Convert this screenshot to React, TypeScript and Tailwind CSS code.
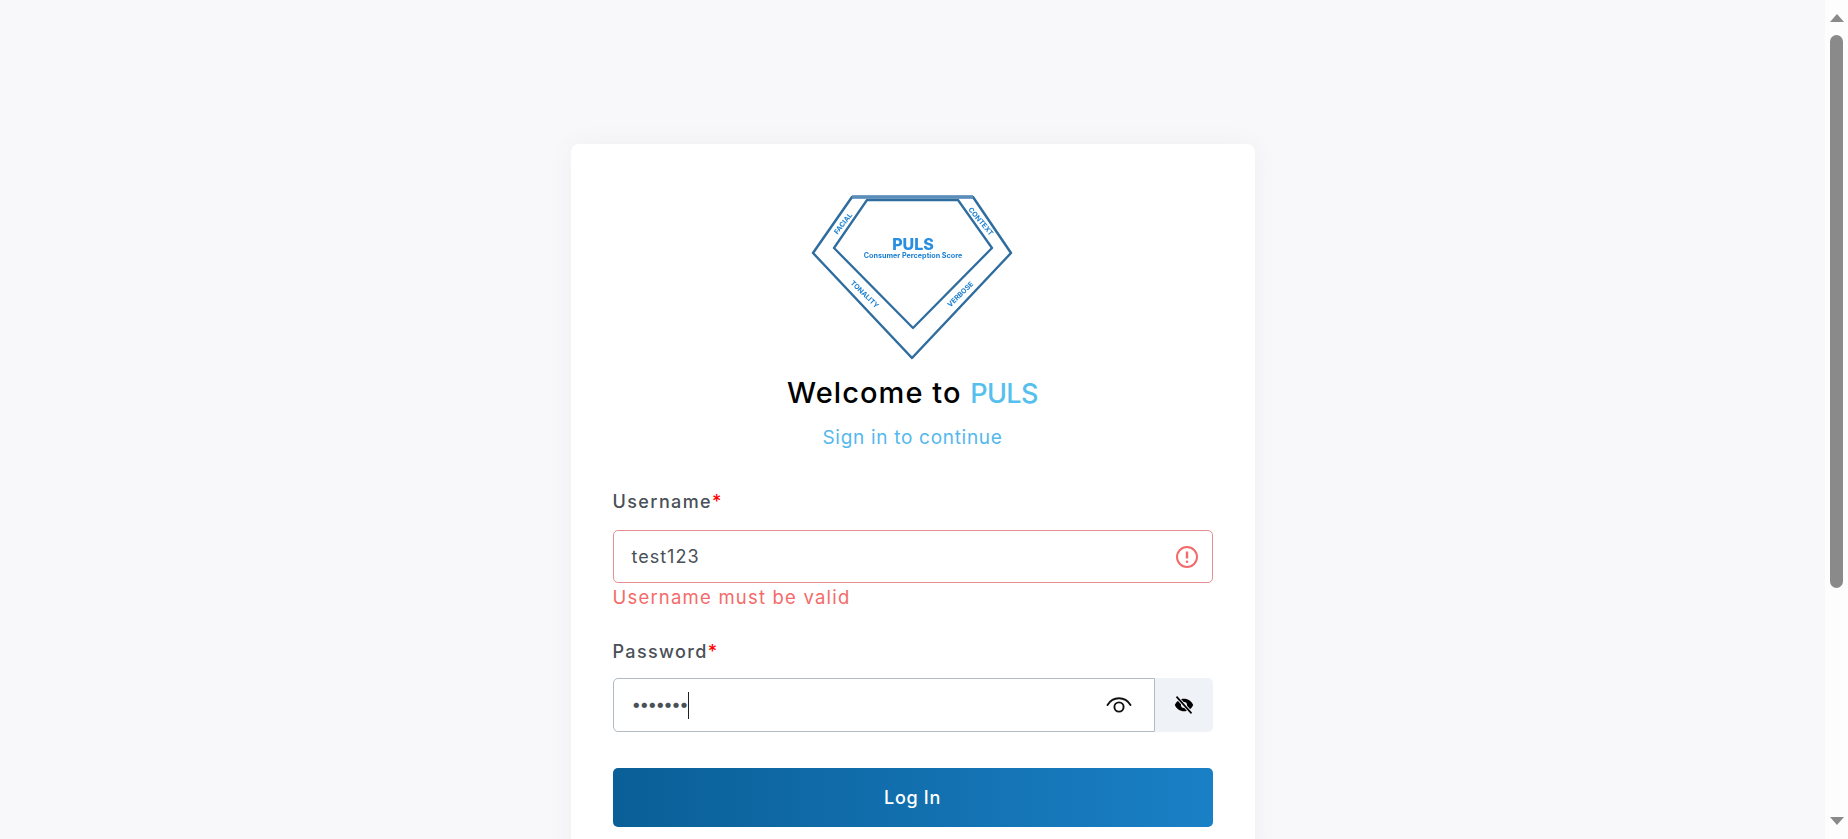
function Logo() {
  return (
    <svg width="204" height="168" viewBox="0 0 204 168" className="block" style={{ filter: 'blur(0.35px)' }}>
      <g fill="none" stroke="#2f6d9f" strokeLinejoin="round">
        <path d="M41 2 L162 2 L200 58 L101 163 L2 58 Z" strokeWidth="2.5" />
        <path d="M56 5 L147 5 L181 53 L102 133 L23 53 Z" strokeWidth="2.3" />
        <path d="M41 2 L162 2" strokeWidth="3.4" stroke="#5a8db8" />
      </g>
      <g fill="#1b7fd0" fontFamily="Inter, sans-serif" fontWeight="700" textAnchor="middle">
        <text x="102" y="54.5" fontSize="16" fontWeight="800" fill="#2a8fe0">PULS</text>
        <text x="102" y="63" fontSize="7.2">Consumer Perception Score</text>
        <text fontSize="7" transform="translate(34 30) rotate(-52)">FACIAL</text>
        <text fontSize="7" transform="translate(168 28) rotate(50)">CONTEXT</text>
        <text fontSize="7" transform="translate(52 101) rotate(44)">TONALITY</text>
        <text fontSize="7" transform="translate(151 101) rotate(-44)">VERBOSE</text>
      </g>
    </svg>
  );
}

function AlertIcon() {
  return (
    <svg width="24" height="24" viewBox="0 0 24 24" fill="none" stroke="#f46a6a">
      <circle cx="12" cy="12" r="10" strokeWidth="2" />
      <path d="M12 6.5 L12 13.5" strokeWidth="2.4" />
      <circle cx="12" cy="16.8" r="1.3" fill="#f46a6a" stroke="none" />
    </svg>
  );
}

function EyeIcon() {
  return (
    <svg width="26" height="20" viewBox="0 0 26 20" fill="none" stroke="#111" strokeWidth="1.9" strokeLinecap="round">
      <path d="M1.5 10 C7 1 19 1 24.5 10" />
      <circle cx="13" cy="12" r="4.6" />
    </svg>
  );
}

function EyeOffIcon() {
  return (
    <svg width="20" height="20" viewBox="0 0 24 24" fill="#000">
      <path d="M12 4.5C7 4.5 2.7 7.6 1 12c1.7 4.4 6 7.5 11 7.5S21.3 16.4 23 12c-1.7-4.4-6-7.5-11-7.5Z" />
      <circle cx="12" cy="12" r="3.6" fill="#eff2f7" />
      <path d="M2.5 1.5 L21.5 22.5" stroke="#eff2f7" strokeWidth="4.2" />
      <path d="M3 2 L21 22" stroke="#000" strokeWidth="2" />
    </svg>
  );
}

function Scrollbar() {
  return (
    <div className="w-[23px] h-[839px] shrink-0 bg-[#fdfdfd] flex flex-col items-center">
      <div className="mt-[14px] mb-[13px] w-0 h-0 border-x-[7.5px] border-x-transparent border-b-[8px] border-b-[#8a8a8a]" />
      <div className="w-[13px] h-[553px] rounded-full bg-[#8a8a8a]" />
      <div className="mt-auto mb-[14px] w-0 h-0 border-x-[7.5px] border-x-transparent border-t-[8px] border-t-[#8a8a8a]" />
    </div>
  );
}

export default function App() {
  return (
    <div className="flex h-[839px] overflow-hidden bg-[#f8f8fb] font-['Inter',sans-serif]">
      <main className="flex-1 flex justify-center pt-[144px] overflow-hidden">
        <div className="w-[684px] h-[720px] shrink-0 bg-white rounded-lg shadow-[0_0_24px_rgba(100,100,120,0.06)] px-[42px] pt-[51px]">
          <div className="flex justify-center">
            <Logo />
          </div>

          <h1 className="mt-[12px] text-center text-[29px] leading-[36px] tracking-[1.05px] font-[450] text-black">
            Welcome to <span className="text-[27px] tracking-[-0.6px] text-[#55c0ee]">PULS</span>
          </h1>
          <p className="mt-[12px] text-center text-[19px] leading-[28px] tracking-[0.7px] text-[#55b8ec]">Sign in to continue</p>

          <form className="mt-[37px]">
            <label className="block text-[18px] leading-[26px] tracking-[1.4px] font-[450] text-[#495057]">
              Username<span className="text-[#f00]">*</span>
            </label>
            <div className="mt-[15px] h-[53px] rounded-[5px] border border-[#e68f92] flex items-center pl-[18px] pr-[13px]">
              <span className="flex-1 text-[18px] tracking-[1px] text-[#495057]">test123</span>
              <AlertIcon />
            </div>
            <p className="mt-[1px] text-[18.5px] leading-[26px] tracking-[1.2px] text-[#f46a6a]">Username must be valid</p>

            <label className="mt-[29px] block text-[18px] leading-[26px] tracking-[1.35px] font-[450] text-[#495057]">
              Password<span className="text-[#f00]">*</span>
            </label>
            <div className="mt-[13px] h-[54px] flex">
              <div className="flex-1 rounded-l-[5px] border border-[#b1bbc4] flex items-center pl-[18px] pr-[22px]">
                <span className="text-[17px] tracking-[-1.6px] text-[#495057]">•••••••</span>
                <span className="ml-[1px] w-px h-[27px] bg-[#222]" />
                <span className="ml-auto">
                  <EyeIcon />
                </span>
              </div>
              <button type="button" className="w-[58px] rounded-r-[5px] bg-[#eff2f7] flex items-center justify-center">
                <EyeOffIcon />
              </button>
            </div>

            <button
              type="button"
              className="mt-[36px] w-full h-[59px] rounded-[5px] bg-gradient-to-r from-[#0a5f97] to-[#1a80c6] text-white text-[18px] tracking-[0.7px] font-[450]"
            >
              Log In
            </button>
          </form>
        </div>
      </main>
      <Scrollbar />
    </div>
  );
}
